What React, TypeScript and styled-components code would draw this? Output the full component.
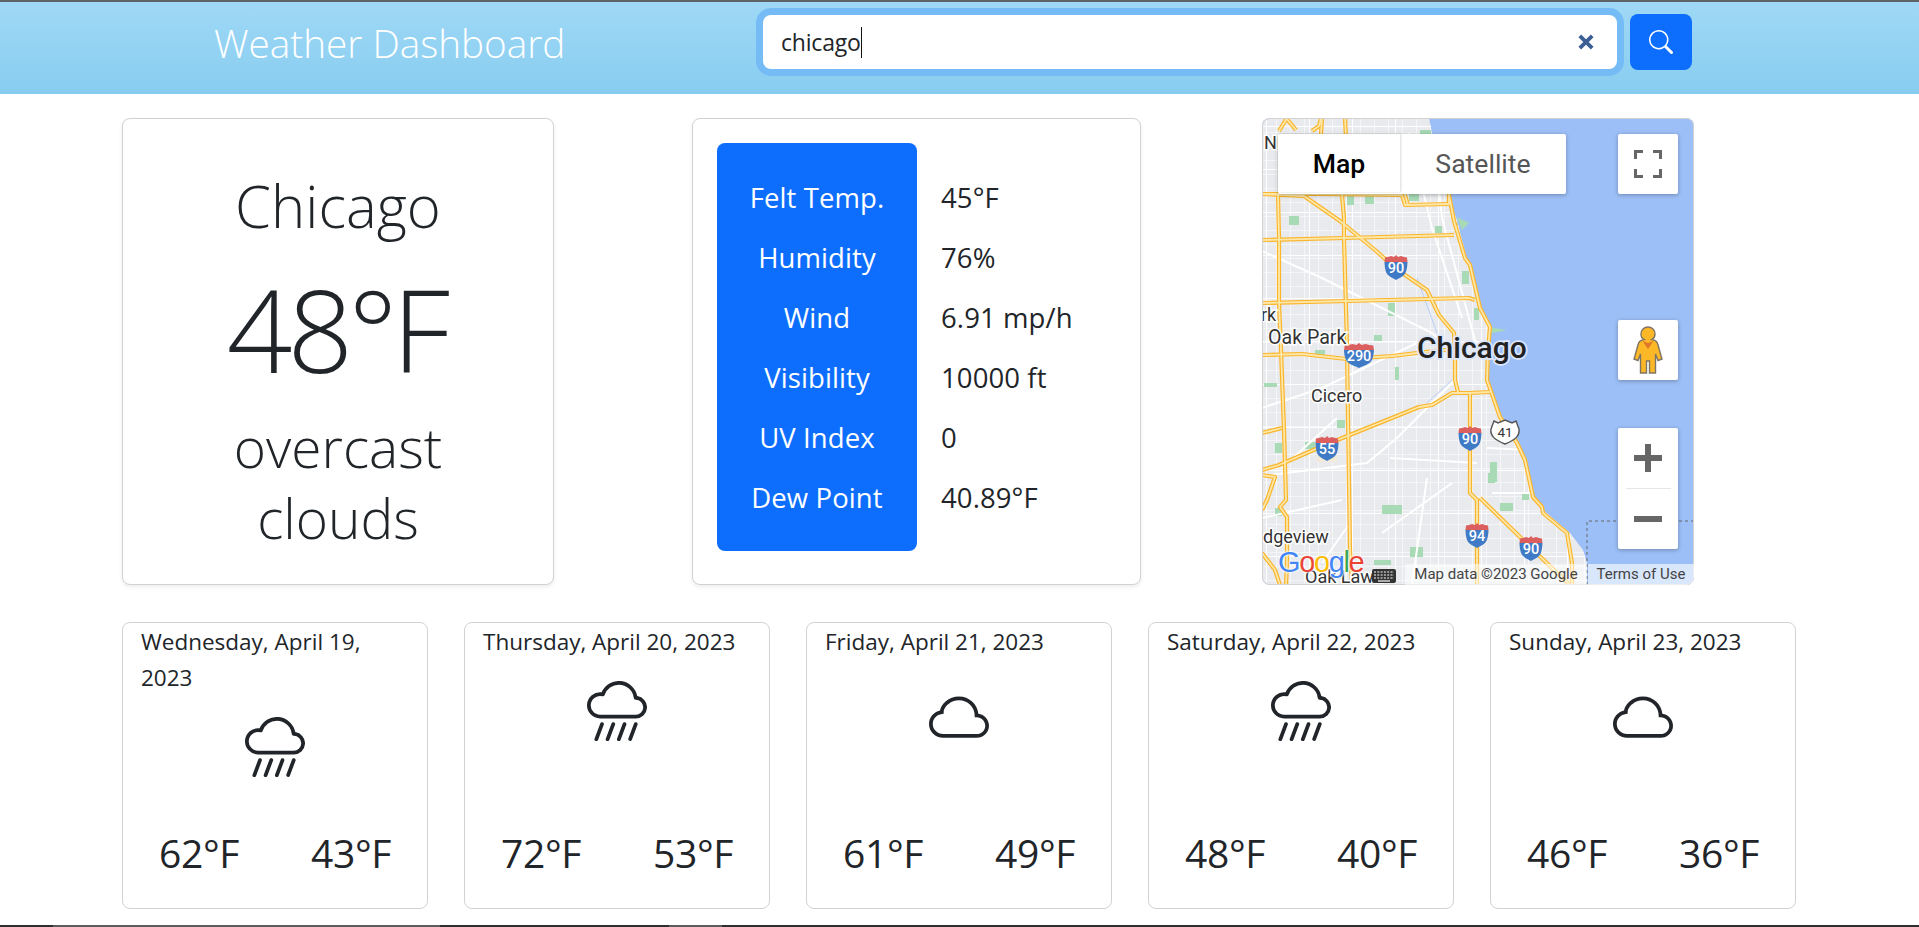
import React from "react";
import styled, { createGlobalStyle } from "styled-components";
import { BsCloud, BsCloudRainHeavy, BsSearch } from "react-icons/bs";

const Global = createGlobalStyle`
  html, body { margin: 0; padding: 0; background: #fff; }
  body { font-family: "Open Sans", "Noto Sans", "Liberation Sans", sans-serif; color: #212529; }
  * { box-sizing: border-box; }
`;

const Page = styled.div`
  width: 1919px;
  height: 927px;
  overflow: hidden;
  display: flex;
  flex-direction: column;
  background: #fff;
`;
const TopEdge = styled.div`
  height: 2px;
  background: #5f6368;
  flex: none;
`;
const BottomEdge = styled.div`
  height: 2px;
  margin-top: auto;
  flex: none;
  background: linear-gradient(
    90deg,
    #2e2e2e 53px,
    #5c5c5c 53px,
    #5c5c5c 440px,
    #2e2e2e 440px,
    #2e2e2e 669px,
    #5c5c5c 669px,
    #5c5c5c 722px,
    #2e2e2e 722px
  );
`;
const Header = styled.header`
  height: 92px;
  flex: none;
  display: flex;
  align-items: flex-start;
  background: linear-gradient(#9fd8f6, #88cdf0);
`;
const Title = styled.h1`
  margin: 16px 0 0 214px;
  width: 542px;
  font-size: 38.7px;
  line-height: 50px;
  font-weight: 300;
  color: #fff;
  white-space: nowrap;
`;
const SearchBox = styled.div`
  margin-top: 13px;
  width: 854px;
  height: 54px;
  margin-left: 7px;
  display: flex;
  align-items: center;
  padding: 0 22px 0 18px;
  background: #fff;
  border-radius: 8px;
  box-shadow: 0 0 0 7px #75bbf5;
  font-size: 23px;
  letter-spacing: -0.2px;
`;
const Caret = styled.span`
  width: 1px;
  height: 31px;
  background: #111;
  flex: none;
`;
const Clear = styled.svg`
  margin-left: auto;
  flex: none;
`;
const SearchButton = styled.button`
  margin: 12px 0 0 13px;
  width: 62px;
  height: 56px;
  border: 0;
  border-radius: 8px;
  background: #0d6efd;
  color: #fff;
  display: flex;
  align-items: center;
  justify-content: center;
  padding: 0;
`;

const TopRow = styled.section`
  flex: none;
  display: flex;
  padding: 24px 0 0 122px;
`;
const Card = styled.div`
  background: #fff;
  border: 1px solid #d2d2d2;
  border-radius: 8px;
  box-shadow: 0 2px 4px rgba(0, 0, 0, 0.075);
  height: 467px;
`;
const CurrentCard = styled(Card)`
  width: 432px;
  display: flex;
  flex-direction: column;
  align-items: center;
  font-weight: 300;
  padding-top: 51px;
`;
const City = styled.div`
  font-size: 58px;
  line-height: 72px;
`;
const CurrentTemp = styled.div`
  font-size: 115px;
  line-height: 144px;
  letter-spacing: -5px;
  margin-top: 15px;
  margin-right: 4px;
`;
const Summary = styled.div`
  font-size: 55px;
  line-height: 71px;
  text-align: center;
  width: 300px;
  margin-top: 10px;
`;
const DetailCard = styled(Card)`
  width: 449px;
  margin-left: 138px;
  padding: 24px;
  display: flex;
`;
const LabelColumn = styled.div`
  width: 200px;
  height: 408px;
  flex: none;
  background: #0d6efd;
  border-radius: 8px;
  color: #fff;
  padding-top: 37px;
  display: flex;
  flex-direction: column;
  gap: 24px;
  text-align: center;
`;
const ValueColumn = styled.div`
  padding: 37px 0 0 24px;
  display: flex;
  flex-direction: column;
  gap: 24px;
`;
const DetailText = styled.div`
  font-size: 27.5px;
  line-height: 36px;
  height: 36px;
  letter-spacing: 0.1px;
  white-space: nowrap;
`;

const MapFrame = styled.div`
  position: relative;
  width: 432px;
  height: 467px;
  margin-left: 121px;
  border-radius: 8px;
  overflow: hidden;
  font-family: Roboto, "Liberation Sans", sans-serif;
  background: #9cbff7;
  outline: 1px solid #d2d2d2;
  outline-offset: -1px;
`;
const MapCanvas = styled.svg`
  display: block;
`;
const MapTypes = styled.div`
  position: absolute;
  left: 16px;
  top: 16px;
  height: 60px;
  width: 288px;
  display: flex;
  background: #fff;
  border-radius: 2px;
  box-shadow: 0 1px 4px rgba(0, 0, 0, 0.3);
`;
const MapType = styled.div<{ $active?: boolean }>`
  height: 58px;
  display: flex;
  align-items: center;
  justify-content: center;
  font-size: 26.6px;
  width: ${(p) => (p.$active ? "122px" : "166px")};
  color: ${(p) => (p.$active ? "#000" : "#565656")};
  font-weight: ${(p) => (p.$active ? 500 : 400)};
  box-shadow: ${(p) => (p.$active ? "1px 0 2px rgba(0,0,0,.15)" : "none")};
`;
const MapControl = styled.div<{ $top: number; $h?: number }>`
  position: absolute;
  left: 356px;
  top: ${(p) => p.$top}px;
  width: 60px;
  height: ${(p) => p.$h ?? 60}px;
  background: #fff;
  border-radius: 2px;
  box-shadow: 0 1px 4px rgba(0, 0, 0, 0.3);
  display: flex;
  flex-direction: column;
  align-items: center;
  justify-content: center;
`;
const ZoomPart = styled.div`
  height: 60px;
  width: 45px;
  display: flex;
  align-items: center;
  justify-content: center;
`;
const ZoomRule = styled.div`
  height: 1px;
  width: 45px;
  background: #e6e6e6;
  flex: none;
`;
const GoogleLogo = styled.div`
  position: absolute;
  left: 16px;
  top: 426px;
  font-family: "Liberation Sans", sans-serif;
  font-size: 29px;
  line-height: 36px;
  letter-spacing: -1.4px;
  text-shadow: 0 0 2px #fff, 0 0 2px #fff, 0 0 3px #fff;
`;
const LogoLetter = styled.span<{ $c: string }>`
  color: ${(p) => p.$c};
`;
const KeyboardIcon = styled.svg`
  position: absolute;
  left: 110px;
  top: 451px;
`;
const Attribution = styled.div<{ $left: number; $w: number; $bg: string }>`
  position: absolute;
  left: ${(p) => p.$left}px;
  width: ${(p) => p.$w}px;
  top: 446px;
  height: 21px;
  background: ${(p) => p.$bg};
  color: #444;
  font-size: 15px;
  line-height: 21px;
  text-align: center;
  white-space: nowrap;
`;

const ForecastRow = styled.section`
  flex: none;
  display: flex;
  gap: 36px;
  padding: 37px 0 0 122px;
`;
const ForecastCard = styled.div`
  width: 306px;
  height: 287px;
  border: 1px solid #d2d2d2;
  border-radius: 8px;
  background: #fff;
  display: flex;
  flex-direction: column;
  padding: 1px 18px 0;
`;
const DateLine = styled.div`
  font-size: 22.5px;
  line-height: 36px;
`;
const IconSlot = styled.div<{ $drop: number }>`
  margin-top: ${(p) => 21 + p.$drop}px;
  display: flex;
  justify-content: center;
  line-height: 0;
`;
const Temps = styled.div`
  margin: auto -18px 25px;
  display: flex;
  justify-content: space-around;
  font-size: 39px;
  line-height: 60px;
  letter-spacing: -0.4px;
`;

const details: [string, string][] = [
  ["Felt Temp.", "45°F"],
  ["Humidity", "76%"],
  ["Wind", "6.91 mp/h"],
  ["Visibility", "10000 ft"],
  ["UV Index", "0"],
  ["Dew Point", "40.89°F"],
];
const forecast = [
  { date: "Wednesday, April 19, 2023", hi: 62, lo: 43, rain: true },
  { date: "Thursday, April 20, 2023", hi: 72, lo: 53, rain: true },
  { date: "Friday, April 21, 2023", hi: 61, lo: 49, rain: false },
  { date: "Saturday, April 22, 2023", hi: 48, lo: 40, rain: true },
  { date: "Sunday, April 23, 2023", hi: 46, lo: 36, rain: false },
];

const highways = [
  "0,76 42,78 78,103 113,132 122,140 143,157 165,172 177,197 192,215 193,232 193,262 196,274",
  "16,76 17,120 17,185 19,232 22,312 24,382 18,389 25,399 25,445 24,467",
  "80,77 82,100 82,120 85,227 85,232 88,432 90,467",
  "0,122 82,120 192,117",
  "0,185 85,183 207,180 213,182",
  "0,76 60,76 140,77 143,87 187,86",
  "187,77 192,103 203,140 208,147 218,190 228,209 226,232 225,262 238,299 255,325 263,342 271,379 280,389 281,395 305,415 310,445 310,467",
  "0,237 40,236 85,241 130,238 180,232 193,232",
  "0,352 17,347 63,327 157,289 170,287 190,275 207,275 228,274",
  "0,315 20,310",
  "0,357 13,359 5,382 0,392",
  "0,435 13,452 18,467",
  "208,275 208,375 215,382 215,467",
  "218,380 258,419 295,455 308,467",
  "59,0 57,8 50,13 M25,0 17,13 M24,0 34,12 M60,0 59,16 M83,0 84,20",
  "143,77 146,87 M187,70 187,87",
];
const streets = [
  "0,133 60,160 170,215 192,235",
  "0,290 60,270 155,225",
  "0,358 105,345 135,320 195,260",
  "0,400 80,382 M88,405 60,445",
  "147,15 170,110 200,200",
  "128,340 215,345 M120,415 190,365",
  "225,330 270,332 M150,467 165,360 M230,375 270,375",
  "170,0 180,100 215,230",
  "75,300 20,350",
];
const parks = [
  [27, 98, 10, 9], [103, 77, 9, 9], [85, 78, 7, 9], [173, 108, 7, 7], [126, 185, 7, 13], [112, 217, 8, 6],
  [53, 232, 10, 6], [147, 76, 10, 7], [200, 153, 7, 13], [158, 12, 11, 4], [133, 249, 4, 13], [75, 302, 8, 8],
  [2, 265, 13, 4], [13, 325, 7, 10], [43, 324, 10, 7], [120, 387, 20, 9], [13, 390, 7, 8], [148, 429, 13, 10],
  [112, 442, 17, 5], [228, 344, 7, 20], [226, 355, 7, 10], [238, 385, 13, 8], [260, 374, 7, 8], [195, 99, 12, 8], [212, 190, 5, 12],
];

function Shield({ x, y, n, wide }: { x: number; y: number; n: string; wide?: boolean }) {
  const s = wide ? 1.3 : 1;
  return (
    <g transform={`translate(${x} ${y}) scale(${s} 1)`}>
      <path d="M-11.5 -5 C-11.5 -5 -11.5 5 -8 8 C-5 11 -2 11.5 0 13 C2 11.5 5 11 8 8 C11.5 5 11.5 -5 11.5 -5 Z" fill="#3f7ac7" />
      <path d="M-11 -9.5 L-8 -10 L-5 -11 L-2 -10 L0 -12 L2 -10 L5 -11 L8 -10 L11 -9.5 L11.5 -5 L-11.5 -5 Z" fill="#dc5f5f" />
      <text x="0" y="6" textAnchor="middle" fontSize="14.5" fontWeight="500" fill="#fff" transform={`scale(${1 / s} 1)`}>
        {n}
      </text>
    </g>
  );
}

function MapDrawing() {
  const label = { fill: "#333", stroke: "#fff", strokeWidth: 3, paintOrder: "stroke" as const, fontSize: 18 };
  return (
    <MapCanvas width={432} height={467} viewBox="0 0 432 467">
      <defs>
        <pattern id="fine" width="14" height="14" patternUnits="userSpaceOnUse">
          <path d="M0 0H14M0 0V14" stroke="#fff" strokeWidth="1.1" />
        </pattern>
        <pattern id="main" width="43" height="43" patternUnits="userSpaceOnUse" x="4" y="8">
          <path d="M0 0H43M0 0V43" stroke="#fff" strokeWidth="2" />
        </pattern>
      </defs>
      <rect width="432" height="467" fill="#9cbff7" />
      <path d="M0 0H167L170 15L185 75L190 89L195 102L205 142L215 179L218 192L228 209L226 232L225 262L238 299L255 325L265 345L271 379L281 392L308 415L321 432L325 445L325 467H0Z" fill="#e8eaed" />
      <clipPath id="landClip">
        <path d="M0 0H167L170 15L185 75L190 89L195 102L205 142L215 179L218 192L228 209L226 232L225 262L238 299L255 325L265 345L271 379L281 392L308 415L321 432L325 445L325 467H0Z" />
      </clipPath>
      <g clipPath="url(#landClip)">
        <rect width="432" height="467" fill="url(#fine)" />
        <rect width="432" height="467" fill="url(#main)" />
        <rect x="55" y="337" width="20" height="7" fill="#f2ead8" />
        {parks.map(([x, y, w, h], i) => (
          <rect key={i} x={x} y={y} width={w} height={h} fill="#a8dab5" />
        ))}
        {streets.map((d, i) => (
          <path key={i} d={"M" + d} fill="none" stroke="#fff" strokeWidth="2" />
        ))}
        <path d="M155 160L175 215M165 285L190 262" fill="none" stroke="#b9cff5" strokeWidth="1" />
      </g>
      <path d="M195 99L207 105L200 112Z M226 209L245 212L226 216Z" fill="#a8dab5" />
      {highways.map((d, i) => (
        <path key={"o" + i} d={"M" + d} fill="none" stroke="#fbb52b" strokeWidth="4.2" strokeLinejoin="round" />
      ))}
      {highways.map((d, i) => (
        <path key={"i" + i} d={"M" + d} fill="none" stroke="#fde7a8" strokeWidth="1.8" strokeLinejoin="round" />
      ))}
      <path d="M325 467V403H432" fill="none" stroke="#666" strokeWidth="1" strokeDasharray="3 3" />
      <Shield x={134} y={149} n="90" />
      <Shield x={97} y={237} n="290" wide />
      <Shield x={208} y={320} n="90" />
      <Shield x={65} y={330} n="55" />
      <Shield x={215} y={417} n="94" />
      <Shield x={269} y={430} n="90" />
      <path d="M232 303L236 305L243 302L250 305L254 303L257 311C258 318 253 322 243 326C233 322 228 318 229 311Z" fill="#fff" stroke="#555" strokeWidth="1.4" />
      <text x="243" y="319" textAnchor="middle" fontSize="13.5" fill="#333">41</text>
      <g fontFamily="Roboto, sans-serif">
        <text x="2" y="31" {...label}>Ni</text>
        <text x="-1" y="203" {...label}>rk</text>
        <text x="6" y="226" {...label} fontSize="19.6">Oak Park</text>
        <text x="49" y="284" {...label}>Cicero</text>
        <text x="1" y="425" {...label}>dgeview</text>
        <text x="43" y="465" {...label}>Oak Lawn</text>
        <text x="155" y="240" fontSize="30" fontWeight="500" fill="#222" stroke="#dbe6fb" strokeWidth="3.5" paintOrder="stroke">Chicago</text>
      </g>
    </MapCanvas>
  );
}

export default function App() {
  return (
    <Page>
      <Global />
      <TopEdge />
      <Header>
        <Title>Weather Dashboard</Title>
        <SearchBox>
          chicago
          <Caret />
          <Clear width="18" height="18" viewBox="0 0 16 16">
            <path d="M2.5 2.5L13.5 13.5M13.5 2.5L2.5 13.5" stroke="#3b5f95" strokeWidth="3.4" />
          </Clear>
        </SearchBox>
        <SearchButton aria-label="Search">
          <BsSearch size={24} />
        </SearchButton>
      </Header>

      <TopRow>
        <CurrentCard>
          <City>Chicago</City>
          <CurrentTemp>48°F</CurrentTemp>
          <Summary>overcast clouds</Summary>
        </CurrentCard>

        <DetailCard>
          <LabelColumn>
            {details.map(([k]) => (
              <DetailText key={k}>{k}</DetailText>
            ))}
          </LabelColumn>
          <ValueColumn>
            {details.map(([k, v]) => (
              <DetailText key={k}>{v}</DetailText>
            ))}
          </ValueColumn>
        </DetailCard>

        <MapFrame>
          <MapDrawing />
          <MapTypes>
            <MapType $active>Map</MapType>
            <MapType>Satellite</MapType>
          </MapTypes>
          <MapControl $top={16}>
            <svg width="28" height="28" viewBox="0 0 28 28">
              <path d="M1.5 9V1.5H9M19 1.5H26.5V9M26.5 19V26.5H19M9 26.5H1.5V19" fill="none" stroke="#666" strokeWidth="3" />
            </svg>
          </MapControl>
          <MapControl $top={202}>
            <svg width="30" height="48" viewBox="0 0 30 48">
              <path d="M15 1C19 1 22 4 22 8C22 10.5 21 12.5 19 13.5C23 14 24.5 16 25 19L29 33L25 34.5L22.5 28V47H16.5V35H13.5V47H7.5V28L5 34.5L1 33L5 19C5.5 16 7 14 11 13.5C9 12.5 8 10.5 8 8C8 4 11 1 15 1Z" fill="#fdb827" stroke="#7f7566" strokeWidth="1.4" />
              <path d="M9.5 15L15 23L20.5 15L15 17Z" fill="#e0782c" />
            </svg>
          </MapControl>
          <MapControl $top={310} $h={121}>
            <ZoomPart>
              <svg width="28" height="28" viewBox="0 0 28 28">
                <path d="M0 11H11V0H17V11H28V17H17V28H11V17H0Z" fill="#666" />
              </svg>
            </ZoomPart>
            <ZoomRule />
            <ZoomPart>
              <svg width="28" height="6" viewBox="0 0 28 6">
                <rect width="28" height="6" fill="#666" />
              </svg>
            </ZoomPart>
          </MapControl>
          <Attribution $left={143} $w={182} $bg="rgba(255,255,255,.55)">Map data ©2023 Google</Attribution>
          <Attribution $left={326} $w={106} $bg="rgba(255,255,255,.62)">Terms of Use</Attribution>
          <GoogleLogo>
            <LogoLetter $c="#4285f4">G</LogoLetter>
            <LogoLetter $c="#ea4335">o</LogoLetter>
            <LogoLetter $c="#fbbc05">o</LogoLetter>
            <LogoLetter $c="#4285f4">g</LogoLetter>
            <LogoLetter $c="#34a853">l</LogoLetter>
            <LogoLetter $c="#ea4335">e</LogoLetter>
          </GoogleLogo>
          <KeyboardIcon width="24" height="14" viewBox="0 0 24 14">
            <rect width="24" height="14" rx="2" fill="#333" />
            <path d="M2 3H22M2 6H22" stroke="#fff" strokeWidth="1.2" strokeDasharray="2 1.3" />
            <path d="M2 9H22" stroke="#fff" strokeWidth="1.2" strokeDasharray="2 1.3" />
            <path d="M6 12H18" stroke="#fff" strokeWidth="1.2" />
          </KeyboardIcon>
        </MapFrame>
      </TopRow>

      <ForecastRow>
        {forecast.map((f) => (
          <ForecastCard key={f.date}>
            <DateLine>{f.date}</DateLine>
            <IconSlot $drop={f.rain ? 0 : 8}>
              {f.rain ? <BsCloudRainHeavy size={60} /> : <BsCloud size={60} />}
            </IconSlot>
            <Temps>
              <span>{f.hi}°F</span>
              <span>{f.lo}°F</span>
            </Temps>
          </ForecastCard>
        ))}
      </ForecastRow>
      <BottomEdge />
    </Page>
  );
}
